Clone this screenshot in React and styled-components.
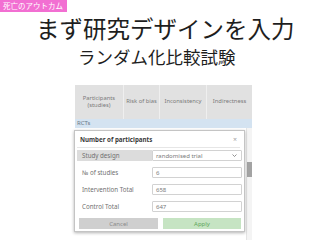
import React from 'react'
import styled, { createGlobalStyle } from 'styled-components'

const GlobalStyle = createGlobalStyle`
  html, body {
    margin: 0;
    padding: 0;
    background: #ffffff;
  }
  body {
    width: 320px;
    height: 240px;
    overflow: hidden;
    font-family: 'Noto Sans', 'Noto Sans CJK JP', sans-serif;
  }
`

const Slide = styled.div`
  width: 320px;
  height: 240px;
  display: flex;
  flex-direction: column;
`

const Tag = styled.div`
  align-self: flex-start;
  height: 12px;
  width: 67px;
  box-sizing: border-box;
  padding-left: 3px;
  background-color: #f26fd2;
  color: #ffffff;
  font-family: 'Noto Sans CJK JP', sans-serif;
  font-size: 7.5px;
  line-height: 12px;
  white-space: nowrap;
`

const Title = styled.h1`
  margin: 4px 0 0 0;
  padding-left: 36px;
  font-family: 'Noto Sans CJK JP', sans-serif;
  font-weight: 400;
  font-size: 23.5px;
  line-height: 24px;
  color: #1e1e1e;
  white-space: nowrap;
`

const Subtitle = styled.h2`
  margin: 8px 0 0 0;
  padding-left: 78px;
  font-family: 'Noto Sans CJK JP', sans-serif;
  font-weight: 400;
  font-size: 17.5px;
  line-height: 18px;
  color: #1e1e1e;
  white-space: nowrap;
`

const Table = styled.div`
  margin: 19px 0 0 75px;
  width: 177px;
  display: flex;
  flex-direction: column;
  font-size: 5.8px;
`

const HeaderRow = styled.div`
  display: grid;
  grid-template-columns: 48px 36px 47px 46px;
  height: 34px;
  background-color: #e1e1e1;
`

const HeaderCell = styled.div`
  display: flex;
  align-items: center;
  justify-content: center;
  text-align: center;
  color: #7a7a7a;
  line-height: 7.5px;
  white-space: nowrap;
  border-left: ${p => (p.$first ? 'none' : '1px solid #efefef')};
`

const GroupRow = styled.div`
  height: 9px;
  background-color: #d4e3f1;
  color: #6d7a88;
  padding-left: 2px;
  line-height: 9px;
  font-size: 6px;
`

const Body = styled.div`
  position: relative;
  height: 112px;
  display: flex;
`

const BodyMain = styled.div`
  flex: 1;
  background: #ffffff;
`

const ScrollTrack = styled.div`
  width: 5px;
  padding-top: 34px;
  border-left: 1px solid #e4e4e4;
  background: #f4f4f4;
`

const ScrollThumb = styled.div`
  height: 15px;
  background: #a3a3a3;
`

const Dialog = styled.div`
  position: absolute;
  left: -1px;
  top: 2px;
  width: 171px;
  height: 102px;
  box-sizing: border-box;
  background: #ffffff;
  border: 1px solid #c4c4c4;
  box-shadow: 0 1px 3px rgba(0, 0, 0, 0.3);
  display: flex;
  flex-direction: column;
  padding: 0 4px 0 2px;
`

const DialogHeader = styled.div`
  height: 16px;
  display: flex;
  align-items: center;
  justify-content: space-between;
  padding: 0 3px 0 3px;
  border-bottom: 1px solid #e6e6e6;
`

const DialogTitle = styled.span`
  font-weight: 700;
  font-size: 6.2px;
  color: #3a3a3a;
`

const Close = styled.span`
  font-size: 7px;
  color: #a0a0a0;
`

const Form = styled.div`
  margin-top: 2px;
  display: grid;
  grid-template-columns: 75px 90px;
  grid-auto-rows: 11px;
  row-gap: 6px;
`

const Label = styled.div`
  display: flex;
  align-items: center;
  padding-left: 5px;
  font-size: 6.2px;
  color: #707070;
  background: ${p => (p.$shaded ? '#dcdcdc' : 'transparent')};
`

const Field = styled.div`
  display: flex;
  align-items: center;
  justify-content: space-between;
  box-sizing: border-box;
  padding: 0 4px 0 3px;
  border: 1px solid #d2d2d2;
  border-radius: 1px;
  font-size: 6px;
  color: #7a7a7a;
`

const Buttons = styled.div`
  margin-top: 6px;
  padding: 0 1px 0 2px;
  display: grid;
  grid-template-columns: 79px 78px;
  column-gap: 5px;
`

const Button = styled.div`
  height: 11px;
  display: flex;
  align-items: center;
  justify-content: center;
  font-size: 6px;
  background: ${p => (p.$primary ? '#c6e4c3' : '#cfcfcf')};
  color: ${p => (p.$primary ? '#5fa65c' : '#8a8a8a')};
`

const Chevron = () => (
  <svg width="5" height="3" viewBox="0 0 5 3">
    <path d="M0.5 0.5 L2.5 2.5 L4.5 0.5" fill="none" stroke="#777" strokeWidth="0.8" />
  </svg>
)

export default function App() {
  return (
    <Slide>
      <GlobalStyle />
      <Tag>死亡のアウトカム</Tag>
      <Title>まず研究デザインを入力</Title>
      <Subtitle>ランダム化比較試験</Subtitle>
      <Table>
        <HeaderRow>
          <HeaderCell $first>Participants<br />(studies)</HeaderCell>
          <HeaderCell>Risk of bias</HeaderCell>
          <HeaderCell>Inconsistency</HeaderCell>
          <HeaderCell>Indirectness</HeaderCell>
        </HeaderRow>
        <GroupRow>RCTs</GroupRow>
        <Body>
          <BodyMain />
          <ScrollTrack>
            <ScrollThumb />
          </ScrollTrack>
          <Dialog>
            <DialogHeader>
              <DialogTitle>Number of participants</DialogTitle>
              <Close>×</Close>
            </DialogHeader>
            <Form>
              <Label $shaded>Study design</Label>
              <Field>randomised trial<Chevron /></Field>
              <Label>№ of studies</Label>
              <Field>6</Field>
              <Label>Intervention Total</Label>
              <Field>658</Field>
              <Label>Control Total</Label>
              <Field>647</Field>
            </Form>
            <Buttons>
              <Button>Cancel</Button>
              <Button $primary>Apply</Button>
            </Buttons>
          </Dialog>
        </Body>
      </Table>
    </Slide>
  )
}
